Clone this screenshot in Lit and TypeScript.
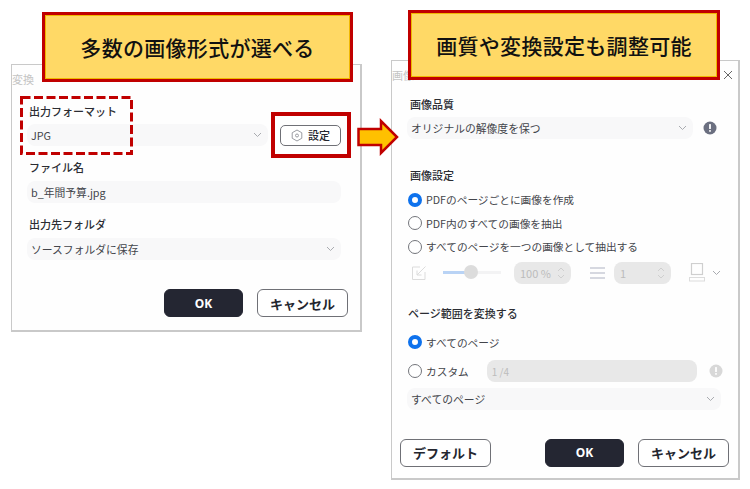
import { LitElement, html, css } from "lit";
import { customElement } from "lit/decorators.js";

const chevron = html`<svg class="chev" width="9" height="6" viewBox="0 0 9 6"><path d="M1 1l3.5 3.5L8 1" fill="none" stroke="#a9abb0" stroke-width="1"/></svg>`;
const updown = html`<svg width="8" height="14" viewBox="0 0 8 14"><path d="M1 5l3-3 3 3M1 9l3 3 3-3" fill="none" stroke="#cfcfcf" stroke-width="1"/></svg>`;
const info = (c: string) => html`<svg width="14" height="14" viewBox="0 0 14 14"><circle cx="7" cy="7" r="6.5" fill="${c}"/><rect x="6.1" y="3" width="1.8" height="5" rx=".6" fill="#fff"/><rect x="6.1" y="9" width="1.8" height="1.8" rx=".6" fill="#fff"/></svg>`;

@customElement("app-root")
export class AppRoot extends LitElement {
  static styles = css`
    :host { display: block; width: 750px; height: 489px; position: relative; overflow: hidden; background: #fff;
      font-family: "Noto Sans CJK JP", "Noto Sans", sans-serif; color: #33353c; font-size: 11px; }
    .dlg { position: absolute; box-sizing: border-box; background: #fefefe; border: 1px solid #c9c9c9; border-width: 1px 2px 2px 1px; }
    .left { left: 11px; top: 64px; width: 351px; height: 268px; padding: 38px 19px 0 15px; display: flex; flex-direction: column; }
    .right { left: 391px; top: 60px; width: 349px; height: 420px; padding: 35px 11px 0 8px; display: flex; flex-direction: column; }
    .title { position: absolute; left: 0; top: 6px; font-size: 11px; color: #c4c4c4; line-height: 16px; }
    .close { position: absolute; right: 5px; top: 9px; }
    .label { font-size: 11px; font-weight: 500; color: #2b2d33; line-height: 16px; height: 16px; }
    .left .label { margin-left: 2px; }
    .field { box-sizing: border-box; height: 22px; border-radius: 8px; background: #f8f8f9; display: flex; align-items: center; justify-content: space-between;
      padding: 0 6px 0 4px; font-size: 10.8px; line-height: 22px; color: #43454b; white-space: nowrap; }
    .sel-row { display: flex; align-items: center; }
    .grow { flex: 1; }
    .fixed { flex: none; width: 241px; }
    .btns { display: flex; gap: 14px; }
    .btn { box-sizing: border-box; flex: none; height: 28px; border-radius: 6px; border: 1px solid #6f7076; background: #fff; display: flex; align-items: center; justify-content: center;
      font-size: 13px; font-weight: 700; color: #24262f; }
    .ok { width: 79px; background: #242632; border-color: #242632; color: #fff; font-family: "Noto Sans", sans-serif; font-size: 12px; }
    .set-btn { box-sizing: border-box; width: 61px; height: 21px; border: 1px solid #6f7076; border-radius: 5px; background: #fff; display: flex; align-items: center; justify-content: center; gap: 5px;
      font-size: 11px; font-weight: 500; color: #24262f; }
    .radio-row { display: flex; align-items: center; height: 23.5px; gap: 4px; font-size: 10.7px; color: #43454b; white-space: nowrap; }
    .radio { box-sizing: border-box; width: 14px; height: 14px; border-radius: 50%; border: 1px solid #73757b; background: #fff; flex: none; }
    .radio.on { border: 4px solid #0e72ed; }
    .dis { display: flex; align-items: center; height: 22px; color: #c4c4c4; }
    .dfield { box-sizing: border-box; height: 22px; width: 57px; border-radius: 8px; background: #e8e8e8; display: flex; align-items: center; justify-content: space-between; padding: 0 6px; font-size: 11px; color: #bcbcbc; flex: none; }
    .slider { width: 58px; height: 3px; margin: 0 13px 0 16px; background: linear-gradient(90deg, #b9d3f5 0 26px, #f3f3f4 26px); position: relative; flex: none; }
    .thumb { position: absolute; left: 21px; top: -6px; width: 14px; height: 14px; border-radius: 50%; background: #dcdcdc; }
    .note { position: absolute; box-sizing: border-box; background: #ffd966; border: 3.5px solid #c00000; outline: 1px solid #f0b800; outline-offset: -4px; color: #111; font-size: 21px; font-weight: 500;
      display: flex; align-items: center; justify-content: center; letter-spacing: .3px; white-space: nowrap; }
    .n1 { left: 42px; top: 12px; width: 311px; height: 70px; }
    .n2 { left: 408px; top: 10px; width: 312px; height: 70px; }
    .solid { position: absolute; box-sizing: border-box; left: 271px; top: 112px; width: 80px; height: 46px; border: 4px solid #c00000; }
    .dash { position: absolute; left: 20px; top: 96px; }
    .arrow { position: absolute; left: 357px; top: 118px; }
  `;

  render() {
    return html`
      <section class="dlg left">
        <div class="title">変換</div>
        <div class="label">出力フォーマット</div>
        <div class="sel-row" style="margin-top:5px">
          <div class="field fixed">JPG ${chevron}</div>
          <div class="grow"></div>
          <div class="set-btn">
            <svg width="12" height="13" viewBox="0 0 12 13"><path d="M6 1l4.8 2.75v5.5L6 12 1.2 9.25v-5.5z" fill="none" stroke="#9a9ca2"/><circle cx="6" cy="6.5" r="1.5" fill="none" stroke="#9a9ca2"/></svg>
            設定
          </div>
        </div>
        <div class="label" style="margin-top:13px">ファイル名</div>
        <div class="field" style="margin-top:6px">b_年間予算.jpg</div>
        <div class="label" style="margin-top:13px">出力先フォルダ</div>
        <div class="field" style="margin-top:6px">ソースフォルダに保存 ${chevron}</div>
        <div class="btns" style="margin-top:29px;justify-content:flex-end;margin-right:-7px">
          <div class="btn ok">OK</div>
          <div class="btn" style="width:91px">キャンセル</div>
        </div>
      </section>

      <section class="dlg right">
        <div class="title">画像</div>
        <svg class="close" width="10" height="10" viewBox="0 0 10 10"><path d="M1 1l8 8M9 1l-8 8" stroke="#666" stroke-width="1"/></svg>
        <div class="label" style="margin-left:10px">画像品質</div>
        <div class="sel-row" style="margin-top:5px;margin-left:7px">
          <div class="field" style="width:286px">オリジナルの解像度を保つ ${chevron}</div>
          <span style="margin-left:10px;display:flex">${info("#6b6f80")}</span>
        </div>
        <div class="label" style="margin-left:10px;margin-top:28px">画像設定</div>
        <div style="margin-top:5px;margin-left:8px">
          <div class="radio-row"><span class="radio on"></span>PDFのページごとに画像を作成</div>
          <div class="radio-row"><span class="radio"></span>PDF内のすべての画像を抽出</div>
          <div class="radio-row"><span class="radio"></span>すべてのページを一つの画像として抽出する</div>
        </div>
        <div class="dis" style="margin-left:11px;margin-top:3px">
          <svg width="16" height="16" viewBox="0 0 16 16" style="flex:none"><path d="M9 2H1.5v12.5H14V7" fill="none" stroke="#dcdcdc"/><path d="M14.5 1.5L6 10M6 5.5V10h4.5" fill="none" stroke="#dcdcdc"/></svg>
          <div class="slider"><div class="thumb"></div></div>
          <div class="dfield"><span>100 %</span>${updown}</div>
          <svg width="15" height="12" viewBox="0 0 15 12" style="margin:0 9px 0 19px;flex:none"><path d="M0 1h15M0 6h15M0 11h15" stroke="#c9ccd6" stroke-width="1.6"/></svg>
          <div class="dfield"><span>1</span>${updown}</div>
          <svg width="16" height="19" viewBox="0 0 16 19" style="margin-left:18px;flex:none"><rect x="2.5" y=".5" width="11" height="11" fill="none" stroke="#cfcfcf" stroke-width="1.2"/><rect x=".5" y="14.5" width="15" height="3.5" fill="none" stroke="#dcdcdc"/></svg>
          <span style="margin-left:7px;display:flex">${chevron}</span>
        </div>
        <div class="label" style="margin-left:8px;margin-top:21px">ページ範囲を変換する</div>
        <div style="margin-left:8px;margin-top:7px">
          <div class="radio-row" style="height:29px"><span class="radio on"></span>すべてのページ</div>
          <div class="radio-row" style="height:29px">
            <span class="radio"></span>カスタム
            <div class="dfield" style="width:210px;margin-left:14px;justify-content:flex-start;padding:0 5px;font-size:10px">1 /4</div>
            <span style="margin-left:8px;display:flex">${info("#d8d8d8")}</span>
          </div>
        </div>
        <div class="field" style="margin-left:7px;margin-top:2px;width:314px">すべてのページ ${chevron}</div>
        <div class="btns" style="margin-top:29px;align-items:center">
          <div class="btn" style="width:91px">デフォルト</div>
          <div class="btn ok" style="margin-left:40px">OK</div>
          <div class="btn" style="width:91px">キャンセル</div>
        </div>
      </section>

      <div class="note n1">多数の画像形式が選べる</div>
      <div class="note n2">画質や変換設定も調整可能</div>
      <svg class="dash" width="114" height="60" viewBox="0 0 114 60"><rect x="1.5" y="1.5" width="110" height="56" fill="none" stroke="#c00000" stroke-width="3" stroke-dasharray="9 3.5"/></svg>
      <div class="solid"></div>
      <svg class="arrow" width="44" height="38" viewBox="0 0 44 38"><path d="M1.5 11H24V3l16 16-16 16v-8H1.5z" fill="#ffc000" stroke="#c00000" stroke-width="2.5"/></svg>
    `;
  }
}
